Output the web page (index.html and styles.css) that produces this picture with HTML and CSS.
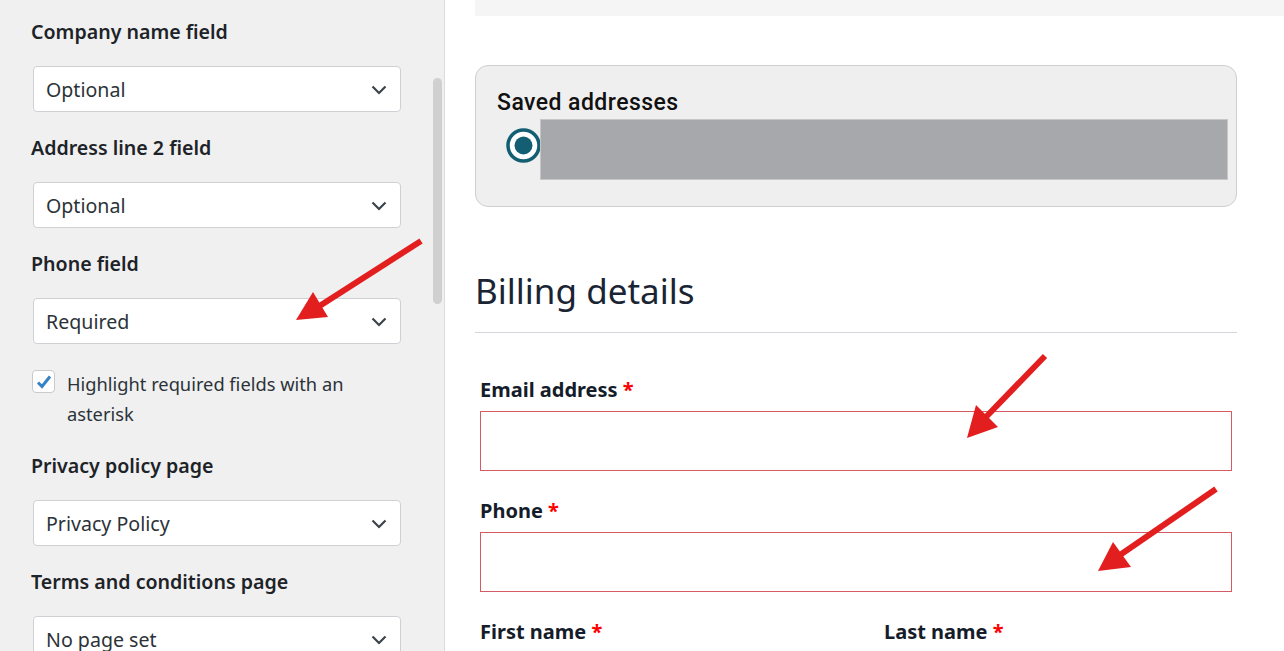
FILE: index.html
```html
<!DOCTYPE html>
<html lang="en">
<head>
<meta charset="utf-8">
<title>Checkout settings</title>
<link rel="stylesheet" href="styles.css">
</head>
<body>
<div class="page">
  <aside class="panel">
    <div class="panel-inner">
      <div class="setting">
        <div class="setting-label">Company name field</div>
        <div class="select"><span>Optional</span><svg class="chev" width="16" height="10" viewBox="0 0 16 10"><path d="M1.5 1.5l6.5 6.5 6.5-6.5" fill="none" stroke="#3c434a" stroke-width="2.2"/></svg></div>
      </div>
      <div class="setting">
        <div class="setting-label">Address line 2 field</div>
        <div class="select"><span>Optional</span><svg class="chev" width="16" height="10" viewBox="0 0 16 10"><path d="M1.5 1.5l6.5 6.5 6.5-6.5" fill="none" stroke="#3c434a" stroke-width="2.2"/></svg></div>
      </div>
      <div class="setting">
        <div class="setting-label">Phone field</div>
        <div class="select"><span>Required</span><svg class="chev" width="16" height="10" viewBox="0 0 16 10"><path d="M1.5 1.5l6.5 6.5 6.5-6.5" fill="none" stroke="#3c434a" stroke-width="2.2"/></svg></div>
      </div>
      <label class="check">
        <span class="box"><svg width="20" height="20" viewBox="0 0 20 20"><path d="M4 10.5l4 4 8-10" fill="none" stroke="#3582c4" stroke-width="3"/></svg></span>
        <span class="check-text">Highlight required fields with an asterisk</span>
      </label>
      <div class="setting">
        <div class="setting-label">Privacy policy page</div>
        <div class="select"><span>Privacy Policy</span><svg class="chev" width="16" height="10" viewBox="0 0 16 10"><path d="M1.5 1.5l6.5 6.5 6.5-6.5" fill="none" stroke="#3c434a" stroke-width="2.2"/></svg></div>
      </div>
      <div class="setting">
        <div class="setting-label">Terms and conditions page</div>
        <div class="select"><span>No page set</span><svg class="chev" width="16" height="10" viewBox="0 0 16 10"><path d="M1.5 1.5l6.5 6.5 6.5-6.5" fill="none" stroke="#3c434a" stroke-width="2.2"/></svg></div>
      </div>
    </div>
    <div class="scrollbar"><div class="thumb"></div></div>
  </aside>
  <main class="main">
    <div class="topbar"></div>
    <section class="saved">
      <div class="saved-title">Saved addresses</div>
      <div class="saved-row">
        <svg class="radio" width="35" height="35" viewBox="0 0 35 35"><circle cx="17.5" cy="17.5" r="15.5" fill="#fff" stroke="#135e73" stroke-width="3.5"/><circle cx="17.5" cy="17.5" r="9" fill="#135e73"/></svg>
        <div class="redacted"></div>
      </div>
    </section>
    <h2 class="billing-title">Billing details</h2>
    <div class="fields">
      <div class="field">
        <div class="field-label">Email address <span class="req">*</span></div>
        <div class="input"></div>
      </div>
      <div class="field">
        <div class="field-label">Phone <span class="req">*</span></div>
        <div class="input"></div>
      </div>
      <div class="field-row">
        <div class="field"><div class="field-label">First name <span class="req">*</span></div></div>
        <div class="field"><div class="field-label">Last name <span class="req">*</span></div></div>
      </div>
    </div>
  </main>
  <svg class="arrows" width="1284" height="651" viewBox="0 0 1284 651">
    <g stroke="#e31e1e" stroke-width="6" fill="#e31e1e" stroke-linecap="butt">
      <line x1="421" y1="241" x2="318" y2="307"/>
      <polygon points="296,320 313,292 328,317" stroke="none"/>
      <line x1="1045" y1="356" x2="985" y2="418"/>
      <polygon points="967,438 976,405 998,427" stroke="none"/>
      <line x1="1216" y1="489" x2="1120" y2="555"/>
      <polygon points="1098,571 1113,542 1131,567" stroke="none"/>
    </g>
  </svg>
</div>
</body>
</html>
```

FILE: styles.css
```css
* { box-sizing: border-box; }
html, body { margin: 0; padding: 0; }
body {
  width: 1284px;
  height: 651px;
  overflow: hidden;
  background: #fff;
  font-family: "Noto Sans", "Open Sans", sans-serif;
}
.page {
  position: relative;
  display: flex;
  width: 1284px;
  height: 651px;
}
.panel {
  width: 445px;
  flex: none;
  background: #f0f0f1;
  border-right: 1px solid #dcdcde;
  display: flex;
  overflow: hidden;
}
.panel-inner {
  flex: 1;
  padding: 18px 0 0 31px;
  display: flex;
  flex-direction: column;
}
.scrollbar {
  width: 12px;
  flex: none;
  padding: 78px 2px 0 1px;
}
.thumb {
  width: 9px;
  height: 226px;
  background: #d0d0d1;
  border-radius: 5px;
}
.setting { margin-bottom: 22px; }
.setting-label {
  font-size: 19.6px;
  font-weight: 600;
  line-height: 28px;
  color: #1d2327;
  margin-bottom: 20px;
}
.select {
  margin-left: 2px;
  width: 368px;
  height: 46px;
  background: #fff;
  border: 1px solid #cfd0d4;
  border-radius: 4px;
  display: flex;
  align-items: center;
  justify-content: space-between;
  padding: 0 13px 0 12px;
  font-size: 19.6px;
  color: #2c3338;
}
.chev { display: block; margin-top: 1px; }
.check {
  display: flex;
  align-items: flex-start;
  margin-top: 3px;
  margin-bottom: 23px;
}
.box {
  width: 23px;
  height: 23px;
  flex: none;
  margin: 1px 12px 0 1px;
  background: #fff;
  border: 1px solid #c9cacd;
  border-radius: 4px;
  display: flex;
  align-items: center;
  justify-content: center;
}
.check-text {
  width: 300px;
  font-size: 18.3px;
  line-height: 30px;
  color: #2c3338;
}
.main {
  flex: 1;
  padding: 0 47px 0 30px;
}
.topbar {
  height: 16px;
  margin-right: -47px;
  background: #f5f5f5;
}
.saved {
  margin-top: 49px;
  height: 142px;
  background: #efefef;
  border: 1px solid #cfcfcf;
  border-radius: 13px;
  padding: 24px 8px 0 21px;
}
.saved-title {
  font-family: Roboto, "Noto Sans", sans-serif;
  font-weight: 500;
  font-size: 23px;
  letter-spacing: 0.45px;
  line-height: 26px;
  color: #111;
}
.saved-row {
  display: flex;
  align-items: flex-start;
  margin-top: 3px;
}
.radio {
  display: block;
  flex: none;
  margin: 9px -1px 0 9px;
}
.redacted {
  flex: 1;
  height: 61px;
  background: #a7a8ab;
  border: 1px solid #c6c6c8;
}
.billing-title {
  margin: 62px 0 0 0;
  padding-bottom: 19px;
  border-bottom: 1px solid #d6d6dc;
  font-size: 35px;
  font-weight: 400;
  line-height: 44px;
  color: #1a2433;
}
.fields {
  padding: 43px 5px 0 5px;
}
.field { margin-bottom: 26px; }
.field-label {
  font-size: 20px;
  font-weight: 700;
  line-height: 28px;
  color: #151c2a;
  margin-bottom: 7px;
}
.req { color: #ff0000; }
.input {
  height: 60px;
  border: 1px solid #d65a64;
  background: #fff;
}
.field-row {
  display: grid;
  grid-template-columns: 1fr 1fr;
  column-gap: 56px;
}
.arrows {
  position: absolute;
  left: 0;
  top: 0;
  pointer-events: none;
}
```
